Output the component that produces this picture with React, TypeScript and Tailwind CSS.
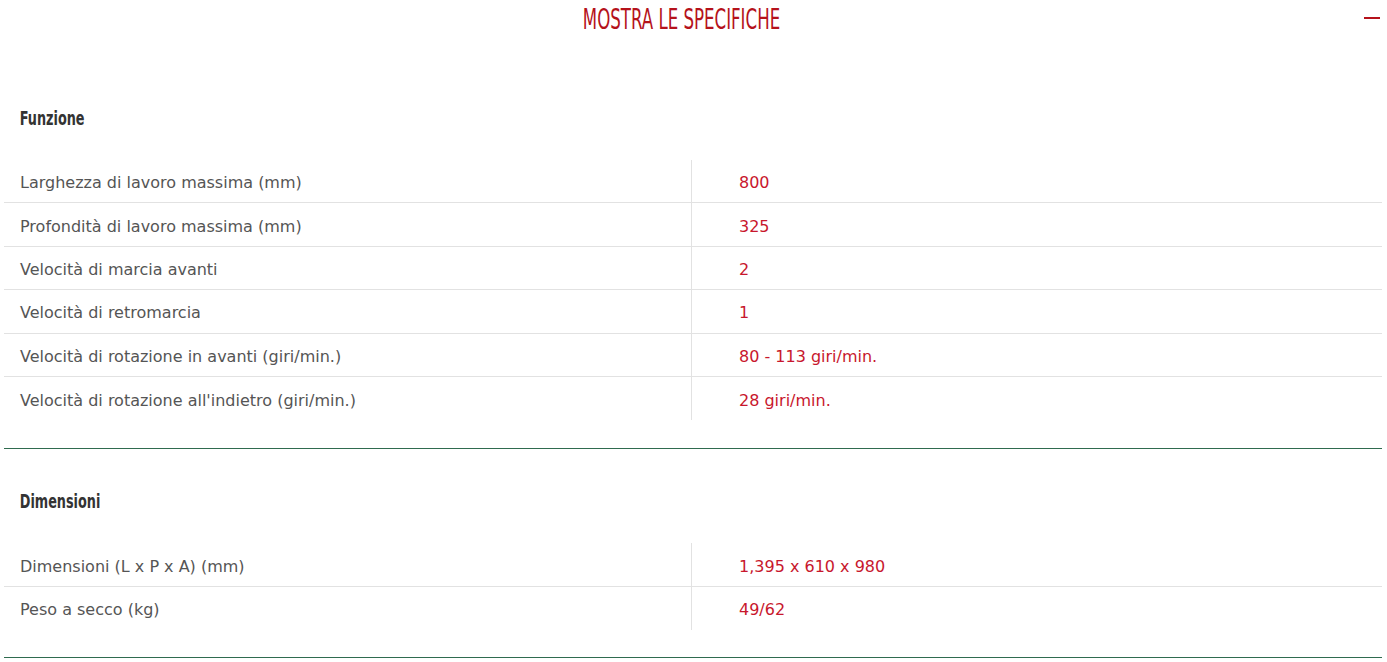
import React from "react";

type Spec = { label: string; value: string };
type Section = { title: string; rows: Spec[] };

const sections: Section[] = [
  {
    title: "Funzione",
    rows: [
      { label: "Larghezza di lavoro massima (mm)", value: "800" },
      { label: "Profondità di lavoro massima (mm)", value: "325" },
      { label: "Velocità di marcia avanti", value: "2" },
      { label: "Velocità di retromarcia", value: "1" },
      { label: "Velocità di rotazione in avanti (giri/min.)", value: "80 - 113 giri/min." },
      { label: "Velocità di rotazione all'indietro (giri/min.)", value: "28 giri/min." },
    ],
  },
  {
    title: "Dimensioni",
    rows: [
      { label: "Dimensioni (L x P x A) (mm)", value: "1,395 x 610 x 980" },
      { label: "Peso a secco (kg)", value: "49/62" },
    ],
  },
];

const condensed = "font-['DejaVu_Sans_Condensed','Liberation_Sans',sans-serif]";

function SpecTable({ section, last }: { section: Section; last?: boolean }) {
  return (
    <div className="border-b border-[#2f6b4f]">
      <h3
        className={`${condensed} pt-[40px] pl-[21px] text-[19px] font-bold leading-[24px] text-[#333] scale-x-75 origin-left`}
      >
        {section.title}
      </h3>
      <div className={`mt-[30px] ${last ? "mb-[27px]" : "mb-[28px]"}`}>
        {section.rows.map((row, i) => (
          <div
            key={row.label}
            className={`flex h-[43.4px] items-center ${i < section.rows.length - 1 ? "border-b border-[#e2e2e2]" : ""}`}
          >
            <div className="flex h-full w-[688px] items-center border-r border-[#e2e2e2] pl-4 pt-1 text-[#555]">
              {row.label}
            </div>
            <div className="pl-[47px] pt-1 text-[#c8172d]">{row.value}</div>
          </div>
        ))}
      </div>
    </div>
  );
}

export default function App() {
  return (
    <div className="min-h-[662px] bg-white font-['DejaVu_Sans','Liberation_Sans',sans-serif] text-[16px]">
      <div className="relative flex h-[40px] items-center justify-center pr-[25px]">
        <h2 className={`${condensed} text-[28px] leading-none text-[#b5121b] scale-x-[0.66]`}>
          MOSTRA LE SPECIFICHE
        </h2>
        <span className="absolute right-[7px] top-[17px] h-[2px] w-[16px] bg-[#b5121b]" />
      </div>
      <div className="ml-1 mr-[5px] pt-[26px]">
        {sections.map((s, i) => (
          <SpecTable key={s.title} section={s} last={i === sections.length - 1} />
        ))}
      </div>
    </div>
  );
}
